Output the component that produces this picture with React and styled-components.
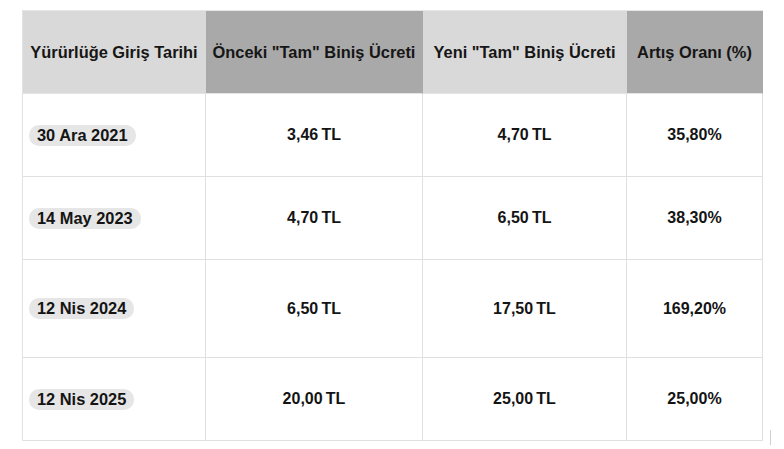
import React from "react";
import styled, { createGlobalStyle } from "styled-components";

const Global = createGlobalStyle`
  html, body { margin: 0; padding: 0; background: #ffffff; }
  body { font-family: "Liberation Sans", Arial, sans-serif; color: #141414; }
`;

const Page = styled.div`
  position: relative;
  width: 784px;
  height: 449px;
  padding: 10px 0 0 22px;
  box-sizing: border-box;
`;

const Grid = styled.div`
  display: grid;
  grid-template-columns: 183px 217px 204px 136px;
  grid-template-rows: 83px 83px 83px 98px 83px;
  width: 741px;
  border-left: 1px solid #e2e2e2;
  border-top: 1px solid #e6e6e6;
  box-sizing: border-box;
`;

const Cell = styled.div`
  display: flex;
  align-items: center;
  justify-content: ${(p) => (p.$left ? "flex-start" : "center")};
  padding: ${(p) => (p.$left ? "0 0 0 6px" : "0")};
  box-sizing: border-box;
  border-right: 1px solid #e0e0e0;
  border-bottom: 1px solid #e0e0e0;
  font-size: 16px;
  font-weight: 700;
  white-space: nowrap;
  background: #ffffff;
`;

const HeadCell = styled(Cell)`
  font-size: 16.4px;
  background: ${(p) => (p.$dark ? "#a9a9a9" : "#d9d9d9")};
  border-right-color: ${(p) => (p.$dark ? "#a9a9a9" : "#d9d9d9")};
  border-bottom-color: #e4e4e4;
  color: #161616;
`;

const Pill = styled.span`
  display: inline-block;
  background: #e6e6e6;
  border-radius: 10px;
  padding: 1px 8px;
  font-size: 16.4px;
  line-height: 19px;
`;

const Mark = styled.div`
  position: absolute;
  left: 770px;
  top: 430px;
  width: 1px;
  height: 15px;
  background: #d0d0d0;
`;

const headers = [
  { t: "Yürürlüğe Giriş Tarihi", dark: false },
  { t: 'Önceki "Tam" Biniş Ücreti', dark: true },
  { t: 'Yeni "Tam" Biniş Ücreti', dark: false },
  { t: "Artış Oranı (%)", dark: true },
];

const T = "\u2009TL";

const rows = [
  ["30 Ara 2021", "3,46" + T, "4,70" + T, "35,80%"],
  ["14 May 2023", "4,70" + T, "6,50" + T, "38,30%"],
  ["12 Nis 2024", "6,50" + T, "17,50" + T, "169,20%"],
  ["12 Nis 2025", "20,00" + T, "25,00" + T, "25,00%"],
];

export default function App() {
  return (
    <>
      <Global />
      <Page>
        <Grid>
          {headers.map((h) => (
            <HeadCell key={h.t} $dark={h.dark}>
              {h.t}
            </HeadCell>
          ))}
          {rows.map((r) => (
            <React.Fragment key={r[0]}>
              <Cell $left>
                <Pill>{r[0]}</Pill>
              </Cell>
              <Cell>{r[1]}</Cell>
              <Cell>{r[2]}</Cell>
              <Cell>{r[3]}</Cell>
            </React.Fragment>
          ))}
        </Grid>
        <Mark />
      </Page>
    </>
  );
}
